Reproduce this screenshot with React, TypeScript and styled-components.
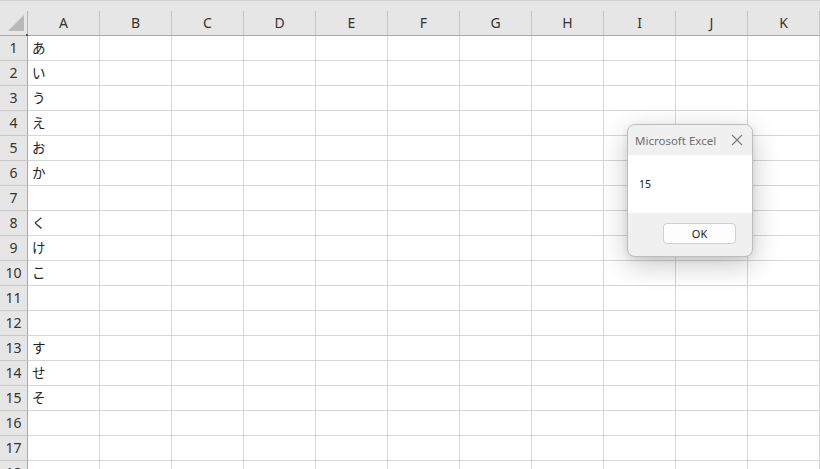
import styled, { createGlobalStyle } from "styled-components";

const GlobalStyle = createGlobalStyle`
    html, body {
        margin: 0;
        padding: 0;
        background: #ffffff;
        overflow: hidden;
    }
    body {
        font-family: "Noto Sans", "Noto Sans CJK JP", sans-serif;
    }
`

const COLUMNS = ["A", "B", "C", "D", "E", "F", "G", "H", "I", "J", "K"];
const ROW_COUNT = 18;
const VALUES: Record<number, string> = {
    1: "あ",
    2: "い",
    3: "う",
    4: "え",
    5: "お",
    6: "か",
    8: "く",
    9: "け",
    10: "こ",
    13: "す",
    14: "せ",
    15: "そ",
};

function App() {
    const rows = Array.from({length: ROW_COUNT}, (_, i) => i + 1);

    return (
        <>
            <GlobalStyle/>
            <Page>
                <TopStrip/>
                <Grid>
                    <Corner><CornerTriangle/><FillMark/></Corner>
                    {COLUMNS.map(c => <ColHeader key={c}>{c}</ColHeader>)}
                    {rows.map(r => (
                        <Row key={r} r={r}/>
                    ))}
                </Grid>
                <Dialog>
                    <DialogTitle>
                        <TitleText>Microsoft Excel</TitleText>
                        <CloseButton>
                            <svg width="12" height="12" viewBox="0 0 12 12">
                                <path d="M1 1 L11 11 M11 1 L1 11" stroke="#7a7a7a" strokeWidth="1.1" fill="none"/>
                            </svg>
                        </CloseButton>
                    </DialogTitle>
                    <DialogBody>15</DialogBody>
                    <DialogFooter>
                        <OkButton>OK</OkButton>
                    </DialogFooter>
                </Dialog>
            </Page>
        </>
    )
}

function Row(props: {r: number}) {
    return (
        <>
            <RowHeader>{props.r}</RowHeader>
            {COLUMNS.map((c, i) => (
                <Cell key={c}>{i === 0 ? VALUES[props.r] ?? "" : ""}</Cell>
            ))}
        </>
    )
}

const Page = styled.div`
    position: relative;
    width: 820px;
    height: 469px;
    overflow: hidden;
    background: #ffffff;
`

const TopStrip = styled.div`
    height: 11px;
    box-sizing: border-box;
    background: #e6e6e6;
    border-top: 1px solid #d2d2d2;
`

const Grid = styled.div`
    display: grid;
    grid-template-columns: 28px repeat(11, 72px);
    grid-auto-rows: 25px;
    grid-template-rows: 25px;
`

const Corner = styled.div`
    position: relative;
    box-sizing: border-box;
    background: #e6e6e6;
    border-right: 1px solid #b4b4b4;
    border-bottom: 1px solid #a8a8a8;
`

const CornerTriangle = styled.div`
    position: absolute;
    left: 8px;
    top: 4px;
    width: 0;
    height: 0;
    border-left: 16px solid transparent;
    border-bottom: 16px solid #b8b8b8;
`

const FillMark = styled.div`
    position: absolute;
    right: -1px;
    bottom: -1px;
    width: 2px;
    height: 2px;
    background: #217346;
`

const ColHeader = styled.div`
    box-sizing: border-box;
    background: #e6e6e6;
    border-right: 1px solid #c6c6c6;
    border-bottom: 1px solid #a8a8a8;
    display: flex;
    align-items: center;
    justify-content: center;
    padding-bottom: 1px;
    font-size: 14px;
    color: #333333;
`

const RowHeader = styled.div`
    box-sizing: border-box;
    background: #e6e6e6;
    border-right: 1px solid #a8a8a8;
    border-bottom: 1px solid #c8c8c8;
    display: flex;
    align-items: center;
    justify-content: center;
    padding-bottom: 2px;
    font-size: 14px;
    color: #333333;
`

const Cell = styled.div`
    box-sizing: border-box;
    border-right: 1px solid #d6d6d6;
    border-bottom: 1px solid #d6d6d6;
    display: flex;
    align-items: center;
    padding-left: 4px;
    padding-bottom: 3px;
    font-family: "Noto Sans CJK JP", sans-serif;
    font-size: 13.5px;
    color: #222222;
`

const Dialog = styled.div`
    position: absolute;
    left: 627px;
    top: 124px;
    width: 126px;
    height: 133px;
    box-sizing: border-box;
    border: 1px solid #bdbdbd;
    border-radius: 8px;
    overflow: hidden;
    display: flex;
    flex-direction: column;
    background: #f0f0f0;
    box-shadow: 0 8px 28px rgba(0, 0, 0, 0.22), 0 2px 6px rgba(0, 0, 0, 0.08);
    font-family: "Noto Sans", sans-serif;
`

const DialogTitle = styled.div`
    height: 30px;
    display: flex;
    align-items: center;
    justify-content: space-between;
    padding: 0 9px 0 7px;
    background: #f0f0f0;
`

const TitleText = styled.span`
    font-size: 11.5px;
    color: #6e6e6e;
`

const CloseButton = styled.span`
    display: flex;
    align-items: center;
`

const DialogBody = styled.div`
    height: 58px;
    background: #ffffff;
    display: flex;
    align-items: center;
    padding-left: 11px;
    font-size: 10.5px;
    color: #1a1a1a;
`

const DialogFooter = styled.div`
    flex: 1;
    display: flex;
    align-items: center;
    justify-content: flex-end;
    padding-right: 16px;
    padding-bottom: 2px;
`

const OkButton = styled.button`
    width: 73px;
    height: 21px;
    box-sizing: border-box;
    background: #fdfdfd;
    border: 1px solid #d0d0d0;
    border-radius: 4px;
    font-family: "Noto Sans", sans-serif;
    font-size: 11px;
    color: #1a1a1a;
    padding: 0;
    cursor: pointer;
`

export default App;
